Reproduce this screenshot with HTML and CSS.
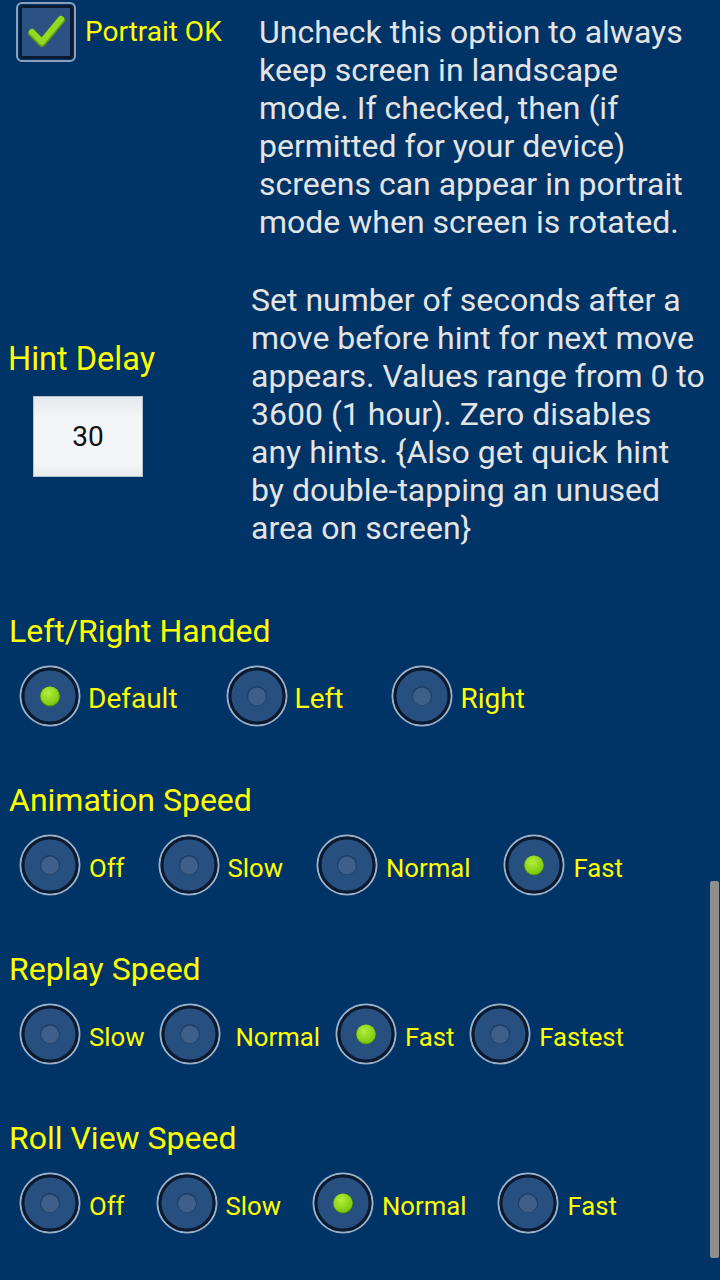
FILE: index.html
```html
<!DOCTYPE html>
<html lang="en">
<head>
<meta charset="utf-8">
<title>Settings</title>
<link rel="stylesheet" href="styles.css">
</head>
<body>
<div class="page">
  <div class="row-portrait">
    <div class="portrait-left">
      <svg class="checkbox" width="60" height="60" viewBox="0 0 60 60">
        <rect x="1" y="1" width="58" height="58" rx="5" fill="none" stroke="#8aa0bc" stroke-width="2"/>
        <rect x="4.5" y="4.5" width="51" height="51" rx="2" fill="#2b5283" stroke="#0a1a30" stroke-width="3"/>
        <path d="M16 31 L26 41 L45 18" fill="none" stroke="#5f9c10" stroke-width="8" stroke-linecap="round" stroke-linejoin="round"/>
        <path d="M16 30 L26 40 L45 17" fill="none" stroke="#92d923" stroke-width="6" stroke-linecap="round" stroke-linejoin="round"/>
      </svg>
      <span class="check-label">Portrait OK</span>
    </div>
    <p class="desc desc-portrait">Uncheck this option to always<br>keep screen in landscape<br>mode. If checked, then (if<br>permitted for your device)<br>screens can appear in portrait<br>mode when screen is rotated.</p>
  </div>

  <div class="row-hint">
    <div class="hint-left">
      <div class="heading heading-hint">Hint Delay</div>
      <div class="num-input">30</div>
    </div>
    <p class="desc desc-hint">Set number of seconds after a<br>move before hint for next move<br>appears. Values range from 0 to<br>3600 (1 hour). Zero disables<br>any hints. {Also get quick hint<br>by double-tapping an unused<br>area on screen}</p>
  </div>

  <section class="group group-first">
    <div class="heading">Left/Right Handed</div>
    <div class="radios gap-hand">
      <div class="opt"><svg class="radio" viewBox="0 0 62 62"><use href="#r-on"/></svg><span class="lbl lbl-big">Default</span></div>
      <div class="opt"><svg class="radio" viewBox="0 0 62 62"><use href="#r-off"/></svg><span class="lbl lbl-big">Left</span></div>
      <div class="opt"><svg class="radio" viewBox="0 0 62 62"><use href="#r-off"/></svg><span class="lbl lbl-big">Right</span></div>
    </div>
  </section>

  <section class="group">
    <div class="heading">Animation Speed</div>
    <div class="radios gap-anim">
      <div class="opt"><svg class="radio" viewBox="0 0 62 62"><use href="#r-off"/></svg><span class="lbl">Off</span></div>
      <div class="opt"><svg class="radio" viewBox="0 0 62 62"><use href="#r-off"/></svg><span class="lbl">Slow</span></div>
      <div class="opt"><svg class="radio" viewBox="0 0 62 62"><use href="#r-off"/></svg><span class="lbl">Normal</span></div>
      <div class="opt"><svg class="radio" viewBox="0 0 62 62"><use href="#r-on"/></svg><span class="lbl">Fast</span></div>
    </div>
  </section>

  <section class="group">
    <div class="heading">Replay Speed</div>
    <div class="radios gap-replay">
      <div class="opt"><svg class="radio" viewBox="0 0 62 62"><use href="#r-off"/></svg><span class="lbl">Slow</span></div>
      <div class="opt"><svg class="radio" viewBox="0 0 62 62"><use href="#r-off"/></svg><span class="lbl lbl-wide">Normal</span></div>
      <div class="opt"><svg class="radio" viewBox="0 0 62 62"><use href="#r-on"/></svg><span class="lbl">Fast</span></div>
      <div class="opt"><svg class="radio" viewBox="0 0 62 62"><use href="#r-off"/></svg><span class="lbl">Fastest</span></div>
    </div>
  </section>

  <section class="group">
    <div class="heading">Roll View Speed</div>
    <div class="radios gap-roll">
      <div class="opt"><svg class="radio" viewBox="0 0 62 62"><use href="#r-off"/></svg><span class="lbl">Off</span></div>
      <div class="opt"><svg class="radio" viewBox="0 0 62 62"><use href="#r-off"/></svg><span class="lbl">Slow</span></div>
      <div class="opt"><svg class="radio" viewBox="0 0 62 62"><use href="#r-on"/></svg><span class="lbl">Normal</span></div>
      <div class="opt"><svg class="radio" viewBox="0 0 62 62"><use href="#r-off"/></svg><span class="lbl">Fast</span></div>
    </div>
  </section>
</div>

<div class="scrollbar"></div>

<svg class="defs" width="0" height="0">
  <defs>
    <radialGradient id="dotOn" cx="40%" cy="35%" r="70%">
      <stop offset="0" stop-color="#b2ef3a"/>
      <stop offset="1" stop-color="#79c40c"/>
    </radialGradient>
    <g id="ring">
      <circle cx="31" cy="31" r="29.5" fill="none" stroke="#9cb0c8" stroke-width="2"/>
      <circle cx="31" cy="31" r="27" fill="#274f7f" stroke="#0b1a2e" stroke-width="3"/>
    </g>
    <g id="r-on">
      <use href="#ring"/>
      <circle cx="31" cy="31.5" r="10" fill="#4e8a0a"/>
      <circle cx="31" cy="31" r="9.5" fill="url(#dotOn)"/>
    </g>
    <g id="r-off">
      <use href="#ring"/>
      <circle cx="31" cy="31" r="10" fill="#1d3c63"/>
      <circle cx="31" cy="31.5" r="9" fill="#3d5f8a"/>
    </g>
  </defs>
</svg>
</body>
</html>
```

FILE: styles.css
```css
html, body {
  margin: 0;
  padding: 0;
  background: #003366;
}

body {
  font-family: Roboto, "Noto Sans", "Liberation Sans", sans-serif;
  color: #e4e4e4;
  width: 720px;
  min-height: 1280px;
  overflow: hidden;
}

.page {
  padding-bottom: 40px;
}

.row-portrait {
  display: flex;
  align-items: flex-start;
}

.portrait-left {
  width: 243px;
  padding-left: 16px;
  padding-top: 2px;
  display: flex;
  align-items: center;
}

.checkbox {
  display: block;
  flex: none;
}

.check-label {
  margin-left: 9px;
  font-size: 28px;
  line-height: 40px;
  color: #ffff00;
  white-space: nowrap;
}

.desc {
  margin: 0;
  font-size: 32px;
  line-height: 38px;
  color: #e4e4e4;
  white-space: nowrap;
}

.desc-portrait {
  padding-top: 13px;
}

.row-hint {
  display: flex;
  align-items: flex-start;
  margin-top: 40px;
}

.hint-left {
  width: 251px;
  padding-top: 58px;
}

.heading {
  padding-left: 9px;
  font-size: 32px;
  line-height: 40px;
  color: #ffff00;
  white-space: nowrap;
}

.heading-hint {
  font-size: 32.5px;
  padding-left: 8px;
}

.num-input {
  margin-top: 17px;
  margin-left: 33px;
  width: 110px;
  height: 81px;
  box-sizing: border-box;
  border: 1px solid #b9c2cc;
  background: linear-gradient(#e6e9ed, #f3f5f8 25%, #f3f5f8 85%, #e9ecef);
  display: flex;
  align-items: center;
  justify-content: center;
  font-size: 28px;
  color: #111111;
}

.group {
  margin-top: 53px;
}

.group-first {
  margin-top: 64px;
}

.radios {
  display: flex;
  align-items: center;
  padding-left: 19px;
  margin-top: 14px;
}

.gap-hand { gap: 48px; }
.gap-anim { gap: 33px; }
.gap-replay { gap: 15px; }
.gap-roll { gap: 31px; }

.opt {
  display: flex;
  align-items: center;
}

.radio {
  display: block;
  width: 62px;
  height: 62px;
  flex: none;
}

.lbl {
  margin-left: 8px;
  padding-top: 6px;
  font-size: 25.7px;
  line-height: 40px;
  color: #ffff00;
  white-space: nowrap;
}

.lbl-big {
  font-size: 28px;
  margin-left: 7px;
}

.lbl-wide {
  margin-left: 14px;
}

.scrollbar {
  position: fixed;
  left: 710px;
  top: 881px;
  width: 9px;
  height: 377px;
  border-radius: 2px;
  background: #8e8e8e;
}

.defs {
  position: absolute;
  width: 0;
  height: 0;
  overflow: hidden;
}
```
